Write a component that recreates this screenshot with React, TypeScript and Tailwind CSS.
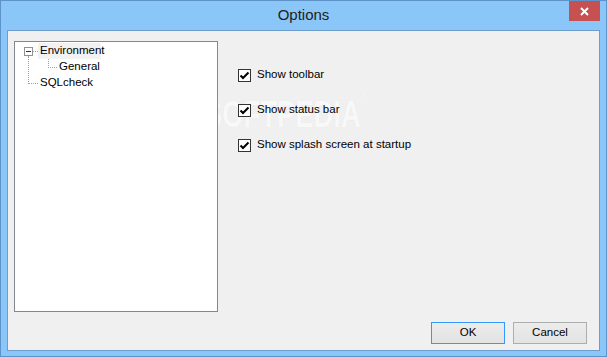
import React from 'react';

const font = { fontFamily: '"Liberation Sans", Arial, sans-serif' };

function CheckBox() {
  return (
    <span className="flex h-[13px] w-[13px] shrink-0 items-center justify-center border border-[#333333] bg-white">
      <svg width="11" height="11" viewBox="0 0 11 11">
        <path d="M1.5 5.5 L4 8 L9.5 2.5" fill="none" stroke="#000" strokeWidth="2" />
      </svg>
    </span>
  );
}

function Option({ label }: { label: string }) {
  return (
    <label className="flex h-[14px] items-center gap-[6px] text-[11.5px] text-black">
      <CheckBox />
      <span>{label}</span>
    </label>
  );
}

function Tree() {
  return (
    <div className="relative h-[271px] w-[204px] shrink-0 border border-[#828790] bg-white text-[11.5px] text-black">
      {/* connectors */}
      <div className="absolute left-[13px] top-[14px] h-[28px] border-l border-dotted border-[#a0a0a0]" />
      <div className="absolute left-[13px] top-[41px] w-[10px] border-t border-dotted border-[#a0a0a0]" />
      <div className="absolute left-[18px] top-[9px] w-[5px] border-t border-dotted border-[#a0a0a0]" />
      <div className="absolute left-[33px] top-[17px] h-[9px] border-l border-dotted border-[#a0a0a0]" />
      <div className="absolute left-[33px] top-[25px] w-[9px] border-t border-dotted border-[#a0a0a0]" />
      {/* expander */}
      <div className="absolute left-[9px] top-[5px] flex h-[9px] w-[9px] items-center justify-center border border-[#919191] bg-white">
        <div className="h-px w-[5px] bg-[#333]" />
      </div>
      <div className="flex flex-col pt-[1px]">
        <div className="ml-[23px] flex h-[16px] w-[63px] items-center bg-[#f2f2f2] pl-[2px]">Environment</div>
        <div className="ml-[44px] flex h-[16px] items-center">General</div>
        <div className="ml-[25px] flex h-[16px] items-center">SQLcheck</div>
      </div>
    </div>
  );
}

function Btn({ label, focused }: { label: string; focused?: boolean }) {
  return (
    <button
      className={`h-[22px] w-[74px] bg-gradient-to-b from-[#ececec] to-[#e3e3e3] text-[11.5px] text-black ${
        focused ? 'border border-[#3399ff]' : 'border border-[#adadad]'
      }`}
    >
      {label}
    </button>
  );
}

export default function App() {
  return (
    <div
      style={font}
      className="flex h-[357px] w-[607px] flex-col border border-[#5e93c9] bg-[#8ac6f7]"
    >
      {/* title bar */}
      <div className="relative flex h-[29px] shrink-0 items-center justify-center">
        <span className="text-[15px] text-[#1e1e1e]">Options</span>
        <div className="absolute right-[6px] top-0 flex h-[20px] w-[31px] items-center justify-center bg-[#c75050]">
          <svg width="9" height="9" viewBox="0 0 9 9">
            <path d="M1 1 L8 8 M8 1 L1 8" stroke="#fff" strokeWidth="2" />
          </svg>
        </div>
      </div>

      {/* client area */}
      <div className="relative mx-[6px] mb-[5px] flex flex-1 flex-col border border-[#6e9dcb] bg-[#f0f0f0]">
        {/* watermark, sits behind the controls */}
        <div className="pointer-events-none absolute left-[196px] top-[56px] z-0 origin-left scale-x-[0.74] text-[37px] font-bold text-[#f8f8f8] [text-shadow:0_0_1px_#e4e4e4]">
          SOFTPEDIA<span className="align-top text-[11px]">®</span>
        </div>

        <div className="relative z-10 flex flex-1 pl-[6px] pt-[10px]">
          <Tree />
          <div className="ml-[20px] flex flex-col gap-[21px] pt-[27px]">
            <Option label="Show toolbar" />
            <Option label="Show status bar" />
            <Option label="Show splash screen at startup" />
          </div>
        </div>
        <div className="relative z-10 flex justify-end gap-[8px] pb-[6px] pr-[12px]">
          <Btn label="OK" focused />
          <Btn label="Cancel" />
        </div>
      </div>
    </div>
  );
}
